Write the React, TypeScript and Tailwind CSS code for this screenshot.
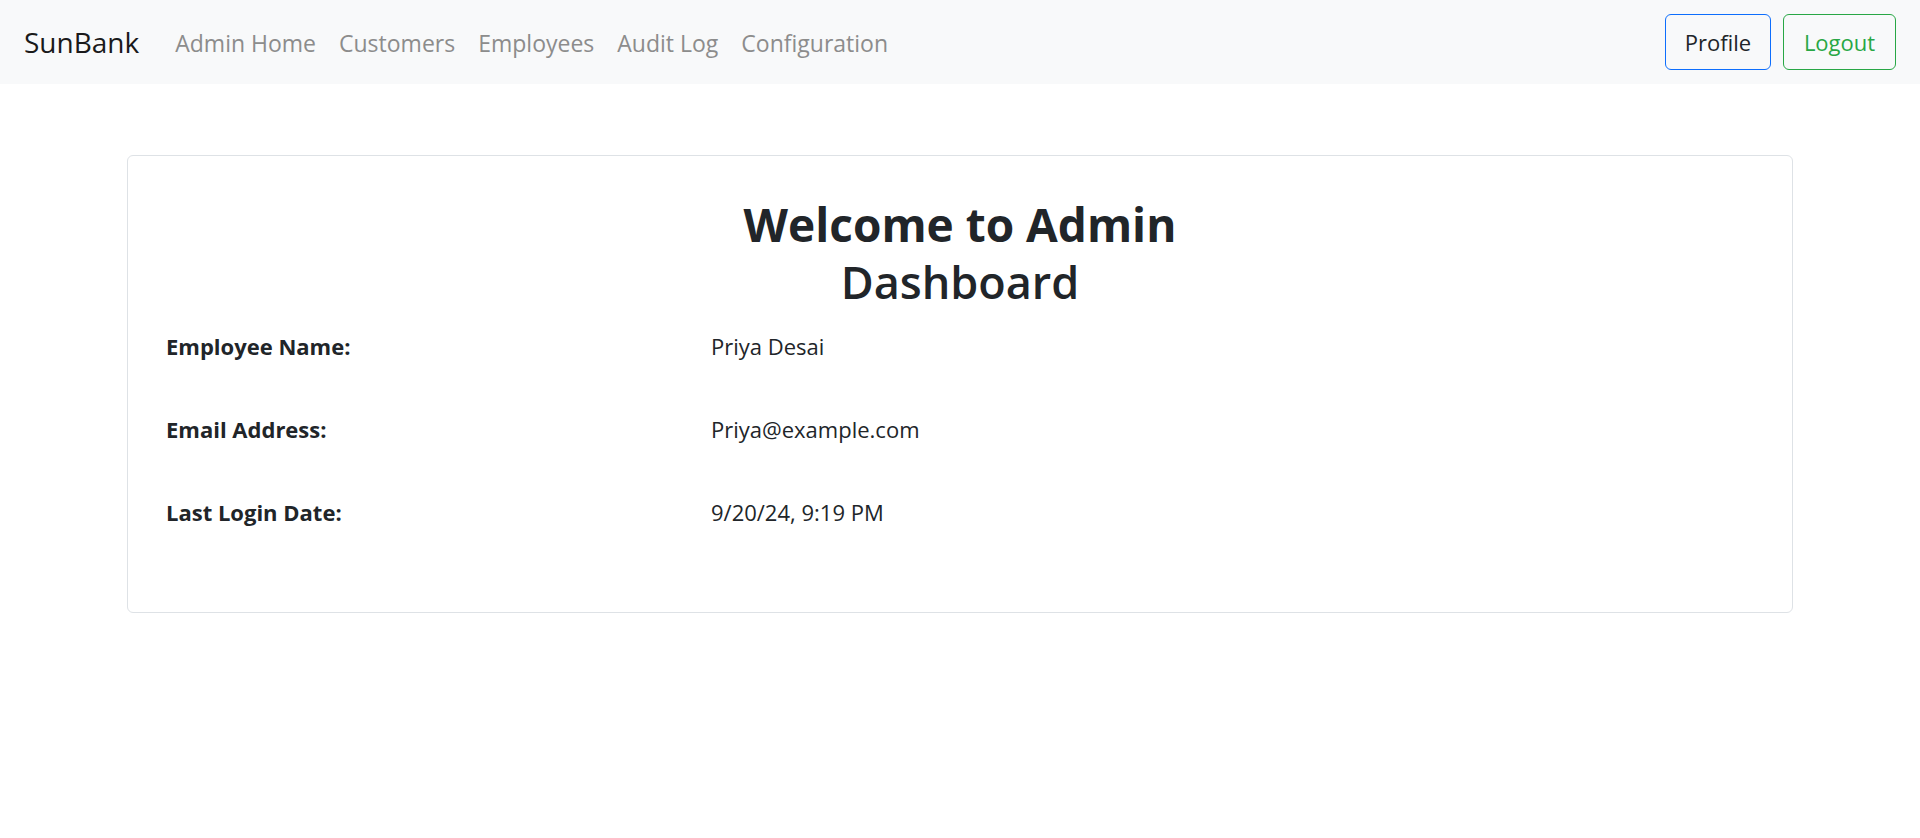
const navLinks = ['Admin Home', 'Customers', 'Employees', 'Audit Log', 'Configuration'];

const details = [
  { label: 'Employee Name:', value: 'Priya Desai' },
  { label: 'Email Address:', value: 'Priya@example.com' },
  { label: 'Last Login Date:', value: '9/20/24, 9:19 PM' },
];

function Navbar() {
  return (
    <nav className="h-[84px] bg-[#f8f9fa] flex items-center pl-[24px] pr-[24px]">
      <a className="text-[28px] text-[#1a1a1a] leading-none">SunBank</a>
      <ul className="flex items-center ml-[36px] gap-[23px] pt-[2px]">
        {navLinks.map((l) => (
          <li key={l} className="text-[23px] text-[#8c8c8c] leading-none">
            {l}
          </li>
        ))}
      </ul>
      <div className="ml-auto flex items-center gap-[12px]">
        <button className="h-[56px] w-[106px] rounded-[6px] border border-[#0d6efd] text-[22px] text-[#212529]">
          Profile
        </button>
        <button className="h-[56px] w-[113px] rounded-[6px] border border-[#28a745] text-[22px] text-[#28a745]">
          Logout
        </button>
      </div>
    </nav>
  );
}

export default function App() {
  return (
    <div className="min-h-screen bg-white font-['Open_Sans',sans-serif] text-[#212529]">
      <Navbar />
      <main className="pt-[71px] px-[127px]">
        <div className="border border-[#dee2e6] rounded-[6px] pt-[39px] pb-[85px] pl-[38px]">
          <h1 className="text-center text-[46px] leading-[58px] -ml-[38px]">
            <span className="block font-bold">Welcome to Admin</span>
            <span className="block font-semibold text-[45px]">Dashboard</span>
          </h1>
          <div className="mt-[20px] flex flex-col gap-[53px]">
            {details.map((d) => (
              <div key={d.label} className="grid grid-cols-[545px_1fr] text-[22px] leading-[30px]">
                <span className="font-bold">{d.label}</span>
                <span>{d.value}</span>
              </div>
            ))}
          </div>
        </div>
      </main>
    </div>
  );
}
